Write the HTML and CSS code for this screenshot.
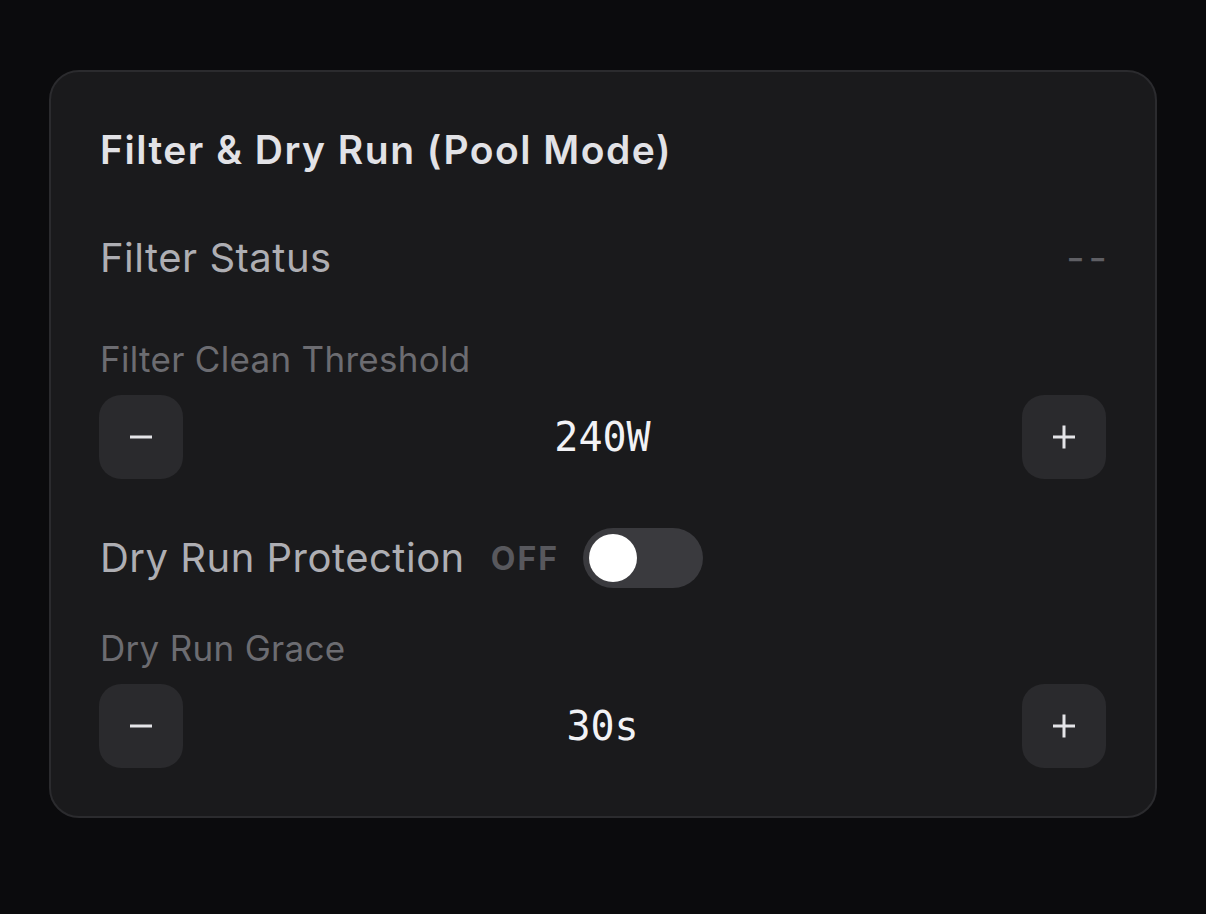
FILE: index.html
```html
<!DOCTYPE html>
<html lang="en">
<head>
<meta charset="utf-8">
<title>Filter &amp; Dry Run</title>
<link rel="stylesheet" href="styles.css">
</head>
<body>
<section class="card">
  <h2 class="card-title">Filter &amp; Dry Run (Pool Mode)</h2>

  <div class="status-row">
    <span class="status-label">Filter Status</span>
    <span class="status-value">--</span>
  </div>

  <div class="field field-first">
    <div class="field-label">Filter Clean Threshold</div>
    <div class="stepper">
      <button class="step-btn" type="button" aria-label="Decrease">
        <svg viewBox="0 0 24 24" width="24" height="24"><path d="M1 12h22" /></svg>
      </button>
      <span class="step-value">240W</span>
      <button class="step-btn" type="button" aria-label="Increase">
        <svg viewBox="0 0 24 24" width="24" height="24"><path d="M1 12h22M12 0.5v23" /></svg>
      </button>
    </div>
  </div>

  <div class="toggle-row">
    <span class="status-label">Dry Run Protection</span>
    <span class="toggle-state">OFF</span>
    <span class="switch"><span class="knob"></span></span>
  </div>

  <div class="field field-second">
    <div class="field-label">Dry Run Grace</div>
    <div class="stepper">
      <button class="step-btn" type="button" aria-label="Decrease">
        <svg viewBox="0 0 24 24" width="24" height="24"><path d="M1 12h22" /></svg>
      </button>
      <span class="step-value">30s</span>
      <button class="step-btn" type="button" aria-label="Increase">
        <svg viewBox="0 0 24 24" width="24" height="24"><path d="M1 12h22M12 0.5v23" /></svg>
      </button>
    </div>
  </div>
</section>
</body>
</html>
```

FILE: styles.css
```css
* {
  box-sizing: border-box;
}

html,
body {
  margin: 0;
  background: #0b0b0d;
}

body {
  padding: 70px 49px 0 49px;
  font-family: Inter, "Noto Sans", "Liberation Sans", sans-serif;
  width: 1206px;
  height: 914px;
}

.card {
  width: 1108px;
  background: #1a1a1c;
  border: 2px solid #2b2b2e;
  border-radius: 30px;
  padding: 56px 49px 48px 48px;
  display: flex;
  flex-direction: column;
}

.card-title {
  margin: 0 0 0 1px;
  font-size: 39px;
  line-height: 44px;
  font-weight: 600;
  letter-spacing: 1.5px;
  color: #e2e2e6;
}

.status-row {
  margin-top: 62px;
  margin-left: 1px;
  display: flex;
  align-items: center;
  justify-content: space-between;
  height: 48px;
}

.status-label {
  font-size: 40px;
  line-height: 48px;
  letter-spacing: 0.5px;
  color: #aeaeb3;
}

.status-value {
  font-size: 40px;
  line-height: 48px;
  color: #5f5f64;
  letter-spacing: 4px;
  margin-right: -5px;
}

.field {
  display: flex;
  flex-direction: column;
}

.field-first {
  margin-top: 57px;
}

.field-second {
  margin-top: 40px;
}

.field-label {
  margin-left: 1px;
  font-size: 35px;
  line-height: 40px;
  letter-spacing: 0.3px;
  color: #6c6c71;
}

.stepper {
  margin-top: 16px;
  display: flex;
  align-items: center;
  justify-content: space-between;
}

.step-btn {
  width: 84px;
  height: 84px;
  border: none;
  border-radius: 22px;
  background: #2a2a2d;
  padding: 0;
  display: flex;
  align-items: center;
  justify-content: center;
}

.step-btn svg {
  stroke: #e4e4e8;
  stroke-width: 3;
  fill: none;
}

.step-value {
  font-family: "DejaVu Sans Mono", "Liberation Mono", monospace;
  font-size: 40px;
  line-height: 48px;
  color: #f2f2f5;
}

.toggle-row {
  margin-top: 49px;
  margin-left: 1px;
  display: flex;
  align-items: center;
  height: 60px;
}

.toggle-row .status-label {
  margin-right: 26px;
}

.toggle-state {
  font-size: 32px;
  font-weight: 700;
  color: #58585d;
  letter-spacing: 2px;
  margin-right: 24px;
}

.switch {
  width: 120px;
  height: 60px;
  border-radius: 30px;
  background: #3a3a3e;
  padding: 6px;
  display: flex;
}

.knob {
  width: 48px;
  height: 48px;
  border-radius: 50%;
  background: #ffffff;
}
```
